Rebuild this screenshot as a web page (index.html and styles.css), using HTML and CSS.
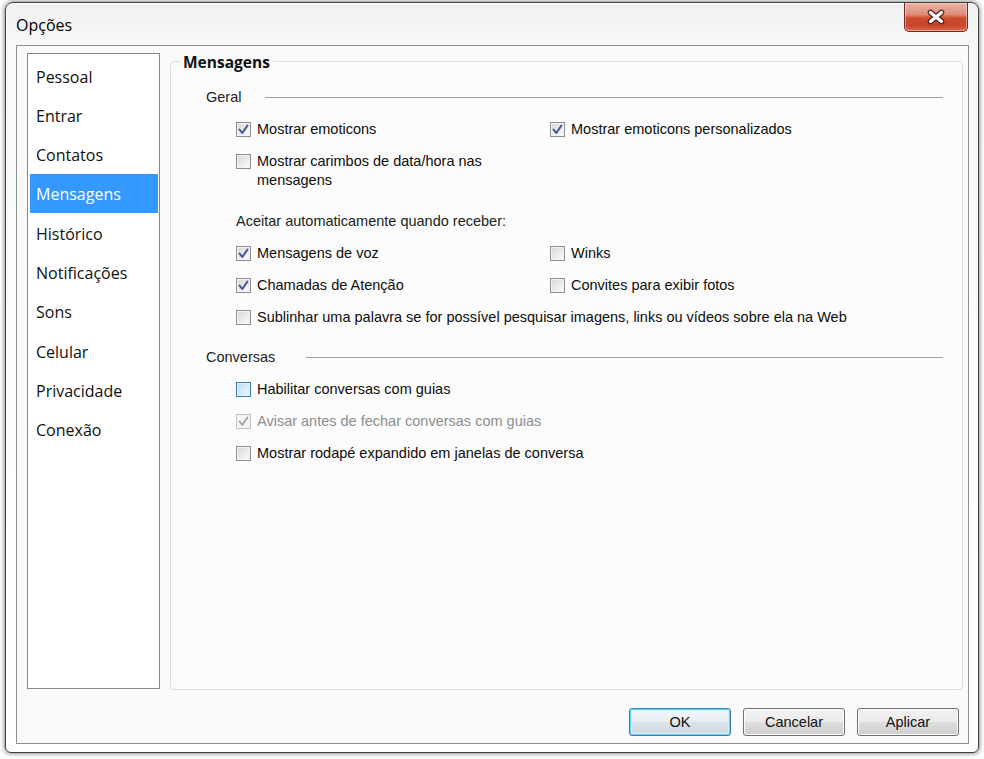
FILE: index.html
```html
<!DOCTYPE html>
<html lang="pt-BR">
<head>
<meta charset="utf-8">
<title>Opções</title>
<link rel="stylesheet" href="styles.css">
</head>
<body>
<div class="window">
  <div class="titlebar">
    <span class="title">Opções</span>
    <button class="close" aria-label="Fechar">
      <svg width="20" height="16" viewBox="0 0 20 16">
        <path d="M4.5 3.5 L15.5 12.5 M15.5 3.5 L4.5 12.5" stroke="#4b1f16" stroke-width="5.6" stroke-linecap="round" fill="none"/>
        <path d="M4.5 3.5 L15.5 12.5 M15.5 3.5 L4.5 12.5" stroke="#ffffff" stroke-width="3.2" stroke-linecap="round" fill="none"/>
      </svg>
    </button>
  </div>
  <div class="client">
    <div class="main">
      <ul class="nav">
        <li>Pessoal</li>
        <li>Entrar</li>
        <li>Contatos</li>
        <li class="selected">Mensagens</li>
        <li>Histórico</li>
        <li>Notificações</li>
        <li>Sons</li>
        <li>Celular</li>
        <li>Privacidade</li>
        <li>Conexão</li>
      </ul>
      <div class="group">
        <div class="group-title">Mensagens</div>

        <div class="section sec-geral"><span class="section-label">Geral</span><span class="rule"></span></div>
        <div class="opts">
          <div class="opt"><span class="box checked"><svg viewBox="0 0 13 13"><path d="M2.5 6.5 L5.3 10 L10.5 2.5"/></svg></span><span class="lbl">Mostrar emoticons</span></div>
          <div class="opt"><span class="box checked"><svg viewBox="0 0 13 13"><path d="M2.5 6.5 L5.3 10 L10.5 2.5"/></svg></span><span class="lbl">Mostrar emoticons personalizados</span></div>
          <div class="opt opt-tall"><span class="box"></span><span class="lbl">Mostrar carimbos de data/hora nas<br>mensagens</span></div>
          <div class="opt"></div>
          <div class="opt full plain">Aceitar automaticamente quando receber:</div>
          <div class="opt"><span class="box checked"><svg viewBox="0 0 13 13"><path d="M2.5 6.5 L5.3 10 L10.5 2.5"/></svg></span><span class="lbl">Mensagens de voz</span></div>
          <div class="opt"><span class="box"></span><span class="lbl">Winks</span></div>
          <div class="opt"><span class="box checked"><svg viewBox="0 0 13 13"><path d="M2.5 6.5 L5.3 10 L10.5 2.5"/></svg></span><span class="lbl">Chamadas de Atenção</span></div>
          <div class="opt"><span class="box"></span><span class="lbl">Convites para exibir fotos</span></div>
          <div class="opt full"><span class="box"></span><span class="lbl">Sublinhar uma palavra se for possível pesquisar imagens, links ou vídeos sobre ela na Web</span></div>
        </div>

        <div class="section sec-conv"><span class="section-label">Conversas</span><span class="rule"></span></div>
        <div class="opts single">
          <div class="opt"><span class="box hover"></span><span class="lbl">Habilitar conversas com guias</span></div>
          <div class="opt disabled"><span class="box checked"><svg viewBox="0 0 13 13"><path d="M2.5 6.5 L5.3 10 L10.5 2.5"/></svg></span><span class="lbl">Avisar antes de fechar conversas com guias</span></div>
          <div class="opt"><span class="box"></span><span class="lbl">Mostrar rodapé expandido em janelas de conversa</span></div>
        </div>
      </div>
    </div>
    <div class="buttons">
      <button class="btn default">OK</button>
      <button class="btn">Cancelar</button>
      <button class="btn">Aplicar</button>
    </div>
  </div>
</div>
</body>
</html>
```

FILE: styles.css
```css
* { box-sizing: border-box; }

html, body {
  margin: 0;
  padding: 0;
  background: #ffffff;
  width: 984px;
  height: 759px;
  overflow: hidden;
}

.window {
  position: relative;
  margin: 2px 0 0 5px;
  width: 974px;
  height: 751px;
  border: 1px solid #3f3f3f;
  border-radius: 8px 8px 6px 6px;
  background: linear-gradient(180deg, #eff0f1 0%, #f9f9f9 6%, #ffffff 100%);
  box-shadow: 0 0 4px 1px rgba(0, 0, 0, 0.45), inset 0 0 0 1px #ffffff;
}

.titlebar {
  height: 42px;
  padding: 11px 0 0 10px;
}

.title {
  font-family: "Open Sans", "Noto Sans", sans-serif;
  font-size: 16px;
  line-height: 22px;
  color: #000;
}

.close {
  position: absolute;
  top: 0;
  right: 10px;
  width: 64px;
  height: 29px;
  padding: 0;
  border: 1px solid #6e2a1d;
  border-top: none;
  border-radius: 0 0 5px 5px;
  background: linear-gradient(180deg, #eab3a6 0%, #e08e79 40%, #cc4a2c 55%, #c8442a 80%, #d66a4c 100%);
  box-shadow: inset 0 0 0 1px rgba(255, 220, 210, 0.55);
  display: flex;
  align-items: center;
  justify-content: center;
}

.close svg { display: block; }

.client {
  margin: 0 9px 0 10px;
  height: 699px;
  border: 1px solid #8e8f8f;
  background: #fafafa;
  padding: 7px 0 0 10px;
}

.main {
  display: flex;
  align-items: flex-start;
  gap: 10px;
}

.nav {
  list-style: none;
  margin: 0;
  width: 133px;
  height: 636px;
  padding: 2px 1px 0 2px;
  border: 1px solid #828790;
  background: #ffffff;
  font-family: "Open Sans", "Noto Sans", sans-serif;
  font-size: 16px;
  color: #111;
}

.nav li {
  height: 39.3px;
  line-height: 37.3px;
  padding: 2.5px 0 0 6px;
}

.nav li.selected {
  background: #3399ff;
  color: #ffffff;
}

.group {
  margin-top: 8px;
  width: 793px;
  height: 629px;
  border: 1px solid #d5dfe5;
  border-radius: 4px;
  background: #fcfcfc;
  padding: 0 19px 0 35px;
  font-family: "Liberation Sans", Arial, sans-serif;
  font-size: 14.5px;
  color: #0d0d0d;
}

.group-title {
  display: block;
  width: max-content;
  margin: -10px 0 0 -26px;
  padding: 0 3px;
  height: 20px;
  line-height: 20px;
  background: #fafafa;
  font-family: "Open Sans", "Noto Sans", sans-serif;
  font-weight: 700;
  font-size: 15.5px;
  color: #111;
}

.section {
  display: flex;
  align-items: center;
  height: 32px;
  margin-top: 9px;
}

.sec-conv { margin-top: 8px; }

.section-label {
  line-height: 19px;
  color: #222;
}

.rule {
  flex: 1;
  height: 1px;
  background: #a2a2a2;
}

.sec-geral .rule { margin-left: 24px; }
.sec-conv .rule { margin-left: 31px; }

.opts {
  display: grid;
  grid-template-columns: 314px 1fr;
  padding-left: 30px;
}

.opts.single { grid-template-columns: 1fr; }

.opt {
  display: flex;
  align-items: flex-start;
  gap: 6px;
  padding: 6.5px 0;
  line-height: 19px;
  min-height: 32px;
  white-space: nowrap;
}

.opt.full { grid-column: 1 / -1; }
.opt.plain { color: #222; }
.opt-tall { margin-bottom: 9px; }

.box {
  flex: none;
  width: 15px;
  height: 15px;
  margin-top: 2px;
  border: 1px solid #8f8f8f;
  background: linear-gradient(135deg, #d6d6d6 0%, #ebebeb 55%, #fbfbfb 100%);
  box-shadow: inset 0 0 0 1px #f4f4f4;
  display: flex;
  align-items: center;
  justify-content: center;
}

.box svg {
  width: 13px;
  height: 13px;
  display: block;
}

.box svg path {
  fill: none;
  stroke: #3d5499;
  stroke-width: 2;
  stroke-linecap: round;
  stroke-linejoin: round;
}

.box.hover {
  border-color: #3c7fb1;
  background: linear-gradient(135deg, #b9dcf4 0%, #d7ecfa 55%, #eef7fd 100%);
  box-shadow: inset 0 0 0 1px #def0fb;
}

.opt.disabled { color: #8d8d8d; }
.opt.disabled .box {
  border-color: #c3c3c3;
  background: #f5f5f5;
}
.opt.disabled .box svg path { stroke: #a8a8a8; }

.buttons {
  display: flex;
  justify-content: flex-end;
  gap: 12px;
  margin-top: 18px;
  padding-right: 9px;
}

.btn {
  width: 102px;
  height: 28px;
  padding: 0;
  border: 1px solid #707070;
  border-radius: 3px;
  background: linear-gradient(180deg, #f2f2f2 0%, #ebebeb 48%, #dddddd 52%, #cfcfcf 100%);
  box-shadow: inset 0 0 0 1px #fbfbfb;
  font-family: "Liberation Sans", Arial, sans-serif;
  font-size: 14.5px;
  color: #111;
}

.btn.default {
  border-color: #3c7fb1;
  box-shadow: inset 0 0 0 1px #5fd3f6, inset 0 0 0 2px #d6f1fb;
  background: linear-gradient(180deg, #f1f6f9 0%, #e8eef2 48%, #dbe3e8 52%, #cfd8de 100%);
}
```
